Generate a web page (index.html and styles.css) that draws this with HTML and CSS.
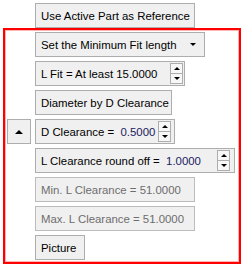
FILE: index.html
```html
<!DOCTYPE html>
<html>

<head lang="en">
    <meta charset="UTF-8">
    <title>Fit Options</title>
    <link rel="stylesheet" href="styles.css">
</head>

<body>
    <div class="top">
        <div class="btn w-ref">Use Active Part as Reference</div>
    </div>
    <div class="frame">
        <div class="btn w-set main">Set the Minimum Fit length<span class="drop"></span></div>
        <div class="btn w-lfit main">
            <span>L Fit = At least 15.0000</span>
            <span class="spin"><span class="spin-up"></span><span class="spin-down"></span></span>
        </div>
        <div class="btn w-dia main">Diameter by D Clearance</div>
        <div class="btn side"><span class="arrow-up"></span></div>
        <div class="btn w-dcl main">
            <span>D Clearance =&nbsp; <span class="val">0.5000</span></span>
            <span class="spin"><span class="spin-up"></span><span class="spin-down"></span></span>
        </div>
        <div class="btn w-lcl main">
            <span>L Clearance round off =&nbsp; <span class="val">1.0000</span></span>
            <span class="spin"><span class="spin-up"></span><span class="spin-down"></span></span>
        </div>
        <div class="btn w-min main disabled">Min. L Clearance = 51.0000</div>
        <div class="btn w-min main disabled">Max. L Clearance = 51.0000</div>
        <div class="btn w-pic main">Picture</div>
    </div>
</body>

</html>
```

FILE: styles.css
```css
body {
    margin: 0;
    background-color: #ffffff;
    font-family: "Liberation Sans", Arial, sans-serif;
    font-size: 11.4px;
    color: #000000;
}

.top {
    padding: 3px 0 0 35px;
}

.btn {
    box-sizing: border-box;
    height: 25px;
    display: flex;
    align-items: center;
    padding: 0 5px;
    background-color: #f0f0f0;
    border: 1px solid #adadad;
    white-space: nowrap;
}

.frame {
    margin: 0 3px;
    height: 236px;
    box-sizing: border-box;
    border: 2px solid #ff0000;
    box-shadow: inset 0 0 0 1px #ffb3b3;
    padding: 2px 0 0 2px;
    display: grid;
    grid-template-columns: 24px auto;
    column-gap: 4px;
    row-gap: 4px;
    align-content: start;
    justify-items: start;
}

.main {
    grid-column: 2;
}

.side {
    grid-column: 1;
    width: 24px;
    justify-content: center;
    padding: 0;
}

.arrow-up {
    width: 0;
    height: 0;
    border-left: 4px solid transparent;
    border-right: 4px solid transparent;
    border-bottom: 4px solid #000000;
}

.w-ref {
    width: 160px;
}

.w-set {
    width: 170px;
}

.w-lfit {
    width: 150px;
    padding-right: 1px;
}

.w-dia {
    width: 137px;
}

.w-dcl {
    width: 140px;
    padding-right: 3px;
}

.w-lcl {
    width: 200px;
    padding-right: 4px;
}

.w-min {
    width: 160px;
}

.w-pic {
    width: 50px;
}

.disabled {
    color: #6d6d6d;
    border-color: #bcbcbc;
}

.val {
    color: #1a2060;
}

.drop {
    margin-left: auto;
    margin-right: 3px;
    width: 0;
    height: 0;
    border-left: 3px solid transparent;
    border-right: 3px solid transparent;
    border-top: 3px solid #000000;
}

.spin {
    margin-left: auto;
    box-sizing: border-box;
    width: 13px;
    height: 21px;
    border: 1px solid #adadad;
    background-color: #f7f7f7;
    display: flex;
    flex-direction: column;
}

.spin-up,
.spin-down {
    flex: 1;
    display: flex;
    align-items: center;
    justify-content: center;
}

.spin-up {
    border-bottom: 1px solid #adadad;
}

.spin-up:before {
    content: '';
    border-left: 3px solid transparent;
    border-right: 3px solid transparent;
    border-bottom: 3px solid #000000;
}

.spin-down:before {
    content: '';
    border-left: 3px solid transparent;
    border-right: 3px solid transparent;
    border-top: 3px solid #000000;
}
```
